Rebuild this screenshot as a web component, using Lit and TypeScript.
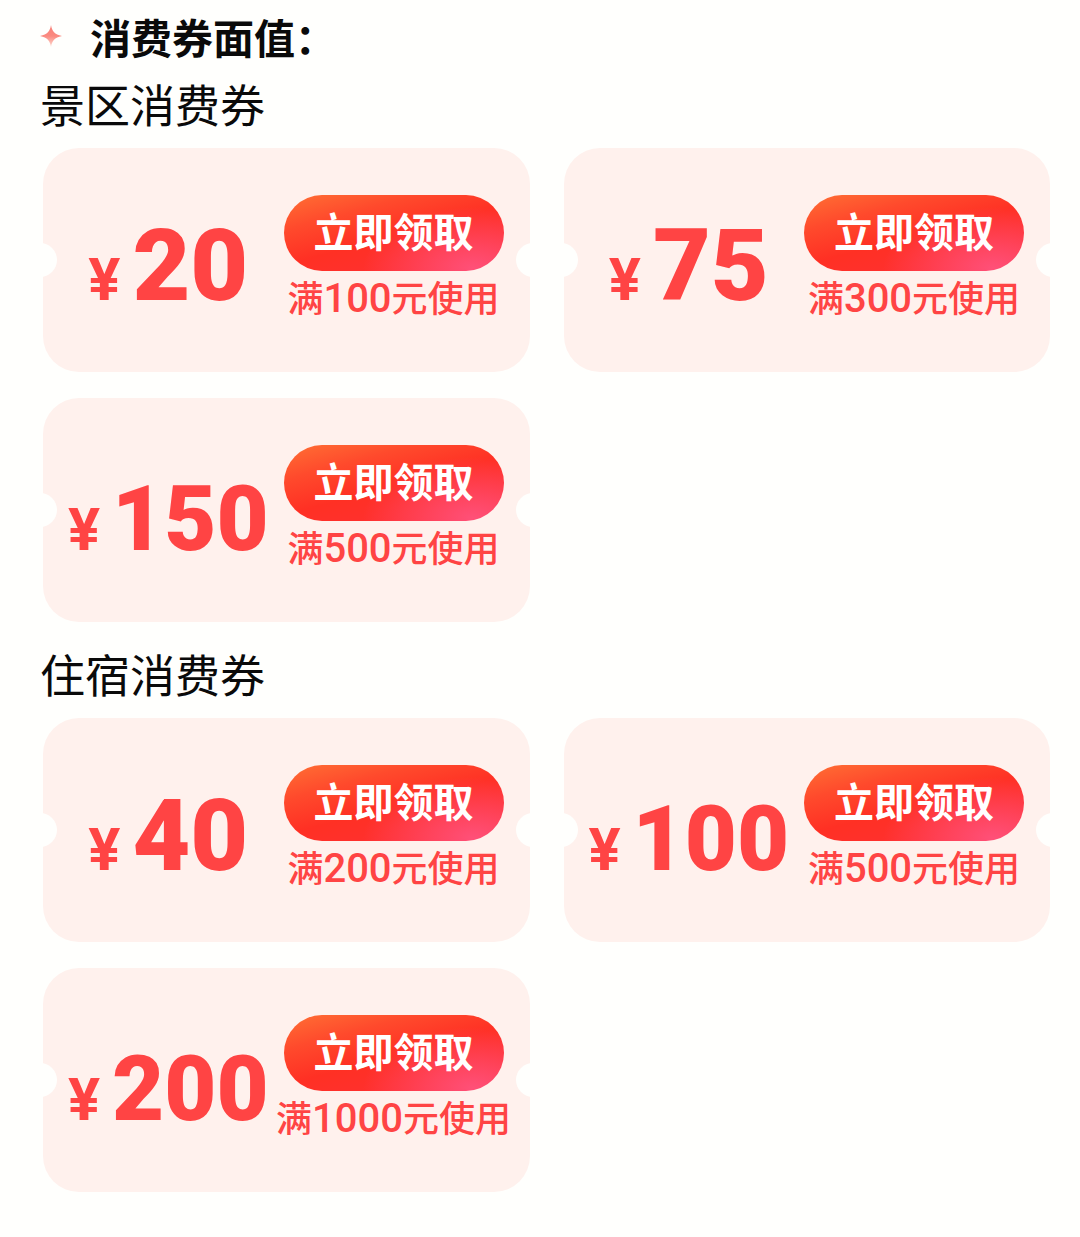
import { LitElement, html, css } from "lit";
import { customElement, property } from "lit/decorators.js";

interface Coupon {
  value: number;
  threshold: number;
}

interface Section {
  name: string;
  coupons: Coupon[];
}

const SECTIONS: Section[] = [
  {
    name: "景区消费券",
    coupons: [
      { value: 20, threshold: 100 },
      { value: 75, threshold: 300 },
      { value: 150, threshold: 500 },
    ],
  },
  {
    name: "住宿消费券",
    coupons: [
      { value: 40, threshold: 200 },
      { value: 100, threshold: 500 },
      { value: 200, threshold: 1000 },
    ],
  },
];

@customElement("coupon-card")
export class CouponCard extends LitElement {
  @property({ type: Number }) value = 0;
  @property({ type: Number }) threshold = 0;

  static styles = css`
    :host {
      display: block;
    }
    .card {
      position: relative;
      display: grid;
      grid-template-columns: minmax(0, 1fr) 232px;
      align-items: start;
      box-sizing: border-box;
      min-height: 224px;
      padding: 47px 20px 32px 16px;
      border-radius: 36px;
      background: #fff1ed;
      color: #ff4444;
    }
    .card::before,
    .card::after {
      content: "";
      position: absolute;
      top: calc(50% - 17px);
      width: 34px;
      height: 34px;
      border-radius: 50%;
      background: #fffffd;
    }
    .card::before {
      left: -20px;
    }
    .card::after {
      right: -20px;
    }
    .amount {
      margin: 0;
      font-family: Roboto, "Noto Sans CJK SC", sans-serif;
      font-size: 100px;
      font-weight: 900;
      line-height: 142px;
      text-align: center;
      white-space: nowrap;
    }
    .currency {
      margin-right: 12px;
      font-size: 60px;
      font-weight: 700;
      line-height: 1;
    }
    .number {
      line-height: 1;
    }
    .long {
      font-size: 90px;
    }
    .claim {
      display: flex;
      flex-direction: column;
      align-items: center;
    }
    .button {
      width: 220px;
      height: 76px;
      padding: 0 0 6px;
      border: 0;
      border-radius: 38px;
      background:
        radial-gradient(ellipse 50% 80% at 86% 96%, #ff5078, #ff507800),
        linear-gradient(165deg, #ff6a33 4%, #ff4a2c 26%, #ff3024 52%, #ff3038 100%);
      color: #fff;
      font-family: "Noto Sans CJK SC", sans-serif;
      font-size: 40px;
      font-weight: 700;
      line-height: 56px;
      white-space: nowrap;
      cursor: pointer;
    }
    .condition {
      margin: 0;
      font-family: "Noto Sans CJK SC", sans-serif;
      font-size: 36px;
      font-weight: 500;
      line-height: 50px;
      white-space: nowrap;
    }
    .threshold {
      font-family: Roboto, sans-serif;
      font-size: 40px;
      line-height: 1;
    }
  `;

  render() {
    return html`
      <article class="card">
        <p class="amount"><span class="currency">¥</span><span class="number ${this.value > 99 ? "long" : ""}">${this.value}</span></p>
        <div class="claim">
          <button class="button" type="button">立即领取</button>
          <p class="condition">满<span class="threshold">${this.threshold}</span>元使用</p>
        </div>
      </article>
    `;
  }
}

@customElement("app-root")
export class AppRoot extends LitElement {
  static styles = css`
    :host {
      display: block;
      min-height: 100vh;
      background: #fffffd;
      color: #0a0a0a;
      font-family: "Noto Sans CJK SC", sans-serif;
    }
    .page {
      padding: 5px 30px 45px 43px;
    }
    .header {
      display: flex;
      align-items: center;
      gap: 28px;
      margin-bottom: 2px;
    }
    .star {
      flex: none;
      width: 22px;
      height: 22px;
      margin-left: -3px;
    }
    .title {
      margin: 0;
      font-size: 41px;
      font-weight: 700;
      line-height: 62px;
    }
    .name {
      margin: 0 0 0 -3px;
      font-size: 45px;
      font-weight: 400;
      line-height: 70px;
    }
    .section {
      padding-bottom: 17px;
    }
    .section:last-child {
      padding-bottom: 0;
    }
    .list {
      display: grid;
      grid-template-columns: repeat(2, minmax(0, 1fr));
      gap: 26px 34px;
      margin: 0;
      padding: 9px 0 0;
      list-style: none;
    }
  `;

  render() {
    return html`
      <main class="page">
        <header class="header">
          <svg class="star" viewBox="0 0 22 22" aria-hidden="true">
            <defs>
              <linearGradient id="glow" x1="0" y1="0" x2="0" y2="1">
                <stop offset="0" stop-color="#f98078" />
                <stop offset="0.5" stop-color="#fa8a80" />
                <stop offset="1" stop-color="#ffdcd2" />
              </linearGradient>
            </defs>
            <path
              d="M11 0C12 6 14.500 9.500 22 11C14.500 12.500 12 16 11 22C10 16 7.500 12.500 0 11C7.500 9.500 10 6 11 0Z"
              fill="url(#glow)"
            />
          </svg>
          <h1 class="title">消费券面值：</h1>
        </header>
        ${SECTIONS.map(
          (section) => html`
            <section class="section">
              <h2 class="name">${section.name}</h2>
              <ul class="list">
                ${section.coupons.map(
                  (coupon) => html`
                    <li>
                      <coupon-card .value=${coupon.value} .threshold=${coupon.threshold}></coupon-card>
                    </li>
                  `,
                )}
              </ul>
            </section>
          `,
        )}
      </main>
    `;
  }
}
